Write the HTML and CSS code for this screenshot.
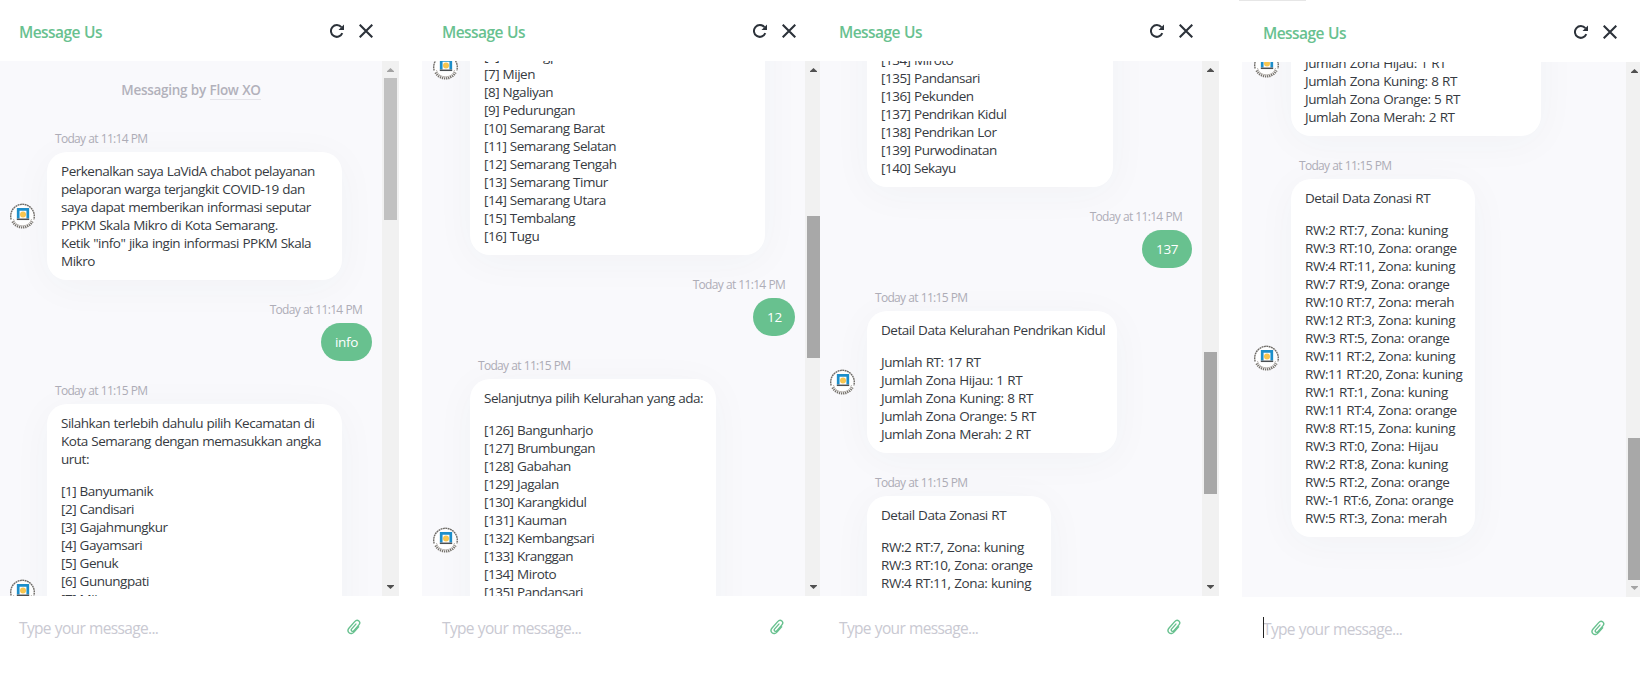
FILE: index.html
```html
<!DOCTYPE html>
<html lang="id">
<head>
<meta charset="utf-8">
<title>Message Us</title>
<link rel="stylesheet" href="styles.css">
</head>
<body>
<svg class="defs" aria-hidden="true">
  <symbol id="reload" viewBox="0 0 14 14">
    <path d="M12.300 9.200A5.900 5.900 0 1 1 11.400 3.200" fill="none" stroke="currentColor" stroke-width="2"/>
    <path d="M14 .6V6H8.500Z" fill="currentColor"/>
  </symbol>
  <symbol id="close" viewBox="0 0 14 14">
    <path d="M.7.7 13.300 13.300M13.300.7.7 13.300" fill="none" stroke="currentColor" stroke-width="2.100"/>
  </symbol>
  <symbol id="clip" viewBox="0 0 14 16">
    <path d="M11.600 7.900 7.200 12.900C5.600 14.800 3.500 15 2.100 13.800C.7 12.500.7 10.600 2.100 9L7.700 2.600C8.900 1.200 10.700 1 11.900 2C13 3 13 4.600 11.900 5.900L6.900 11.600C6.200 12.400 5.300 12.500 4.700 12C4 11.400 4.100 10.600 4.700 9.900L8.900 5.100" fill="none" stroke="currentColor" stroke-width="1.400" stroke-linecap="round"/>
  </symbol>
  <symbol id="up" viewBox="0 0 7 4"><path d="M0 4V3.300L3.500 0L7 3.300V4Z" fill="currentColor"/></symbol>
  <symbol id="down" viewBox="0 0 7 4"><path d="M0 0V.7L3.500 4L7 .7V0Z" fill="currentColor"/></symbol>
  <symbol id="seal" viewBox="0 0 25 26">
    <circle cx="12.500" cy="13" r="12.500" fill="#fff"/>
    <path d="M1.200 16.500A11.800 11.800 0 1 1 23.800 16.500" fill="none" stroke="#6f6c69" stroke-width="1.400" stroke-dasharray="1.900 .5"/>
    <path d="M2.500 18.500A11.400 11.400 0 0 0 22.500 18.500" fill="none" stroke="#77736e" stroke-width="2.400" stroke-dasharray="1.300 .8"/>
    <path d="M3.400 16A9.500 9.500 0 0 0 21.600 16" fill="none" stroke="#b5b1ad" stroke-width=".9"/>
    <path d="M8.200 15.500V6.300H17.800V15.500" fill="none" stroke="#1d8fcb" stroke-width="2.700"/>
    <circle cx="13" cy="11.400" r="3" fill="#f8c650"/>
    <path d="M6.800 16.300H19.200" fill="none" stroke="#4c5053" stroke-width="1.500"/>
  </symbol>
</svg>

<main class="board">
  <section class="chat">
    <header class="head"><h2 class="title">Message Us</h2><svg class="icon"><use href="#reload"/></svg><svg class="icon"><use href="#close"/></svg></header>
    <div class="body">
      <div class="view">
        <div class="thread">
          <p class="credit">Messaging by <a class="brand">Flow XO</a></p>
          <article class="msg">
            <time class="time">Today at 11:14 PM</time>
            <div class="row"><svg class="avatar"><use href="#seal"/></svg>
              <div class="bubble wide"><p>Perkenalkan saya LaVidA chabot pelayanan<br>pelaporan warga terjangkit COVID-19 dan<br>saya dapat memberikan informasi seputar<br>PPKM Skala Mikro di Kota Semarang.<br>Ketik "info" jika ingin informasi PPKM Skala<br>Mikro</p></div>
            </div>
          </article>
          <article class="msg mine">
            <time class="time">Today at 11:14 PM</time>
            <div class="row"><div class="bubble w51"><p>info</p></div></div>
          </article>
          <article class="msg">
            <time class="time">Today at 11:15 PM</time>
            <div class="row"><svg class="avatar"><use href="#seal"/></svg>
              <div class="bubble wide h376"><p>Silahkan terlebih dahulu pilih Kecamatan di<br>Kota Semarang dengan memasukkan angka<br>urut:</p><p>[1] Banyumanik<br>[2] Candisari<br>[3] Gajahmungkur<br>[4] Gayamsari<br>[5] Genuk<br>[6] Gunungpati<br>[7] Mijen</p></div>
            </div>
          </article>
        </div>
      </div>
      <div class="bar"><svg class="arrow off"><use href="#up"/></svg><div class="track"><div class="thumb idle"></div></div><svg class="arrow"><use href="#down"/></svg></div>
    </div>
    <footer class="foot"><span class="hint">Type your message...</span><svg class="clip"><use href="#clip"/></svg></footer>
  </section>

  <section class="chat second">
    <header class="head"><h2 class="title">Message Us</h2><svg class="icon"><use href="#reload"/></svg><svg class="icon"><use href="#close"/></svg></header>
    <div class="body">
      <div class="view">
        <div class="thread scrolled-2">
          <article class="msg first">
            <div class="row"><svg class="avatar"><use href="#seal"/></svg>
              <div class="bubble wide h376 end"><p>[6] Gunungpati<br>[7] Mijen<br>[8] Ngaliyan<br>[9] Pedurungan<br>[10] Semarang Barat<br>[11] Semarang Selatan<br>[12] Semarang Tengah<br>[13] Semarang Timur<br>[14] Semarang Utara<br>[15] Tembalang<br>[16] Tugu</p></div>
            </div>
          </article>
          <article class="msg mine">
            <time class="time">Today at 11:14 PM</time>
            <div class="row"><div class="bubble w42"><p>12</p></div></div>
          </article>
          <article class="msg">
            <time class="time">Today at 11:15 PM</time>
            <div class="row"><svg class="avatar"><use href="#seal"/></svg>
              <div class="bubble w246 h322"><p>Selanjutnya pilih Kelurahan yang ada:</p><p>[126] Bangunharjo<br>[127] Brumbungan<br>[128] Gabahan<br>[129] Jagalan<br>[130] Karangkidul<br>[131] Kauman<br>[132] Kembangsari<br>[133] Kranggan<br>[134] Miroto<br>[135] Pandansari</p></div>
            </div>
          </article>
        </div>
      </div>
      <div class="bar"><svg class="arrow"><use href="#up"/></svg><div class="track at-138"><div class="thumb"></div></div><svg class="arrow"><use href="#down"/></svg></div>
    </div>
    <footer class="foot"><span class="hint">Type your message...</span><svg class="clip"><use href="#clip"/></svg></footer>
  </section>

  <section class="chat">
    <header class="head"><h2 class="title">Message Us</h2><svg class="icon"><use href="#reload"/></svg><svg class="icon"><use href="#close"/></svg></header>
    <div class="body">
      <div class="view">
        <div class="thread scrolled-3">
          <article class="msg first">
            <div class="row">
              <div class="bubble w246 h322 end"><p>[134] Miroto<br>[135] Pandansari<br>[136] Pekunden<br>[137] Pendrikan Kidul<br>[138] Pendrikan Lor<br>[139] Purwodinatan<br>[140] Sekayu</p></div>
            </div>
          </article>
          <article class="msg mine">
            <time class="time">Today at 11:14 PM</time>
            <div class="row"><div class="bubble w50"><p>137</p></div></div>
          </article>
          <article class="msg">
            <time class="time">Today at 11:15 PM</time>
            <div class="row"><svg class="avatar"><use href="#seal"/></svg>
              <div class="bubble w250"><p>Detail Data Kelurahan Pendrikan Kidul</p><p class="stats">Jumlah RT: 17 RT<br>Jumlah Zona Hijau: 1 RT<br>Jumlah Zona Kuning: 8 RT<br>Jumlah Zona Orange: 5 RT<br>Jumlah Zona Merah: 2 RT</p></div>
            </div>
          </article>
          <article class="msg">
            <time class="time">Today at 11:15 PM</time>
            <div class="row">
              <div class="bubble w184 h358"><p>Detail Data Zonasi RT</p><p class="stats">RW:2 RT:7, Zona: kuning<br>RW:3 RT:10, Zona: orange<br>RW:4 RT:11, Zona: kuning</p></div>
            </div>
          </article>
        </div>
      </div>
      <div class="bar"><svg class="arrow"><use href="#up"/></svg><div class="track at-274"><div class="thumb"></div></div><svg class="arrow"><use href="#down"/></svg></div>
    </div>
    <footer class="foot"><span class="hint">Type your message...</span><svg class="clip"><use href="#clip"/></svg></footer>
  </section>

  <section class="chat fourth">
    <div class="edge"></div>
    <header class="head"><h2 class="title">Message Us</h2><svg class="icon"><use href="#reload"/></svg><svg class="icon"><use href="#close"/></svg></header>
    <div class="body">
      <div class="view">
        <div class="thread scrolled-4">
          <article class="msg first">
            <div class="row"><svg class="avatar"><use href="#seal"/></svg>
              <div class="bubble w250 h142 end"><p class="stats">Jumlah Zona Hijau: 1 RT<br>Jumlah Zona Kuning: 8 RT<br>Jumlah Zona Orange: 5 RT<br>Jumlah Zona Merah: 2 RT</p></div>
            </div>
          </article>
          <article class="msg">
            <time class="time">Today at 11:15 PM</time>
            <div class="row"><svg class="avatar"><use href="#seal"/></svg>
              <div class="bubble w184"><p>Detail Data Zonasi RT</p><p class="stats">RW:2 RT:7, Zona: kuning<br>RW:3 RT:10, Zona: orange<br>RW:4 RT:11, Zona: kuning<br>RW:7 RT:9, Zona: orange<br>RW:10 RT:7, Zona: merah<br>RW:12 RT:3, Zona: kuning<br>RW:3 RT:5, Zona: orange<br>RW:11 RT:2, Zona: kuning<br>RW:11 RT:20, Zona: kuning<br>RW:1 RT:1, Zona: kuning<br>RW:11 RT:4, Zona: orange<br>RW:8 RT:15, Zona: kuning<br>RW:3 RT:0, Zona: Hijau<br>RW:2 RT:8, Zona: kuning<br>RW:5 RT:2, Zona: orange<br>RW:-1 RT:6, Zona: orange<br>RW:5 RT:3, Zona: merah</p></div>
            </div>
          </article>
        </div>
      </div>
      <div class="bar"><svg class="arrow"><use href="#up"/></svg><div class="track at-359"><div class="thumb"></div></div><svg class="arrow off"><use href="#down"/></svg></div>
    </div>
    <footer class="foot"><span class="hint caret">Type your message...</span><svg class="clip"><use href="#clip"/></svg></footer>
  </section>
</main>
</body>
</html>
```
FILE: styles.css
```css
* { box-sizing: border-box; }

body {
  margin: 0;
  background: #fff;
  color: #363a41;
  font-family: "Open Sans", "Noto Sans", sans-serif;
  font-size: 13.5px;
  line-height: 18px;
  letter-spacing: -0.49px;
  word-spacing: 0.5px;
}

p, h2 { margin: 0; }
svg { display: block; flex: none; }
.defs { position: absolute; width: 0; height: 0; }

.board {
  display: flex;
  width: 1642px;
  height: 686px;
  overflow: hidden;
}

/* --lead is the strip left of the widget's own content */
.chat {
  --lead: 0px;
  display: flex;
  flex-direction: column;
  flex: none;
  width: 399px;
  overflow: hidden;
}
.second { --lead: 1px; width: 398px; margin-left: 23px; }
.fourth { --lead: 5px; width: 401px; margin-left: 20px; }

.edge {
  height: 1px;
  width: 67px;
  background: #e6e6e6;
}

.head {
  display: flex;
  align-items: center;
  gap: 15px;
  flex: none;
  width: calc(399px + var(--lead));
  height: 61px;
  padding: 1px 26px 0 calc(19px + var(--lead));
}
.title {
  flex: 1;
  padding-top: 2px;
  color: #68c18f;
  font-size: 15.5px;
  font-weight: 600;
  line-height: 22px;
  letter-spacing: -0.55px;
}
.icon { width: 14px; height: 14px; color: #2c323a; }

.body {
  display: flex;
  flex: none;
  width: calc(399px + var(--lead));
  height: 535px;
}
.fourth .body { width: 401px; margin-left: 3px; }
.view {
  flex: none;
  width: calc(382px + var(--lead));
  overflow: hidden;
  padding-left: var(--lead);
  background: #f9f9fc;
}
.fourth .view { width: 384px; padding-left: 2px; }
.thread { display: flex; flex-direction: column; }
.scrolled-2 { margin-top: -182px; }
.scrolled-3 { margin-top: -196px; }
.scrolled-4 { margin-top: -68px; }

.credit {
  height: 48px;
  padding-top: 20px;
  color: #b2b1bb;
  font-weight: 600;
  letter-spacing: -0.3px;
  text-align: center;
  white-space: nowrap;
}
.brand { border-bottom: 1px solid #e4e4e9; }

.msg { padding-top: 21px; }
.first { padding-top: 0; }
.time {
  display: block;
  height: 22px;
  padding: 0 20px 0 55px;
  color: #aeadb7;
  font-size: 12px;
  letter-spacing: -0.7px;
  white-space: nowrap;
}
.row {
  display: flex;
  align-items: center;
  gap: 12px;
  padding: 0 10px;
}
.row > .bubble:first-child { margin-left: 37px; }
.avatar { width: 25px; height: 26px; }
.bubble {
  flex: none;
  padding: 10px 14px;
  border-radius: 20px;
  background: #fff;
  box-shadow: 0 6px 40px rgba(40, 70, 70, 0.04);
  white-space: nowrap;
}
.bubble p + p { margin-top: 14px; }
.stats { letter-spacing: -0.42px; }
.wide { width: 295px; }
.w246 { width: 246px; }
.w250 { width: 250px; }
.w184 { width: 184px; }
.h376 { height: 376px; }
.h358 { height: 358px; }
.h322 { height: 322px; }
.h142 { height: 142px; }
.end {
  display: flex;
  flex-direction: column;
  justify-content: flex-end;
}

.mine .time { text-align: right; }
.mine .row { justify-content: flex-end; }
.mine .row > .bubble {
  margin-left: 0;
  background: #68c18f;
  color: #fff;
  font-weight: 500;
  letter-spacing: -0.3px;
  box-shadow: none;
}
.w51 { width: 51px; }
.w42 { width: 42px; }
.w50 { width: 50px; }

.bar {
  display: flex;
  flex-direction: column;
  align-items: center;
  flex: none;
  width: 17px;
  padding: 7px 0;
  background: #f1f1f1;
}
.arrow { width: 7px; height: 4px; color: #505050; }
.off { color: #a3a3a3; }
.track {
  flex: 1;
  align-self: stretch;
  padding: 6px 2px 0;
}
.at-138 { padding-top: 144px; }
.at-274 { padding-top: 280px; }
.at-359 { padding-top: 365px; }
.thumb { height: 142px; background: #a8a8a8; }
.idle { background: #c1c1c1; }

.foot {
  display: flex;
  align-items: center;
  justify-content: space-between;
  flex: none;
  width: calc(399px + var(--lead));
  height: 62px;
  padding: 0 38px 0 calc(19px + var(--lead));
}
.hint {
  position: relative;
  padding-top: 1px;
  color: #c9c9d2;
  font-size: 15.5px;
  line-height: 22px;
  letter-spacing: -0.65px;
}
.caret::before {
  content: "";
  position: absolute;
  left: 0;
  top: 0;
  width: 1px;
  height: 21px;
  background: #222;
}
.clip { width: 14px; height: 16px; color: #68c18f; }
```
